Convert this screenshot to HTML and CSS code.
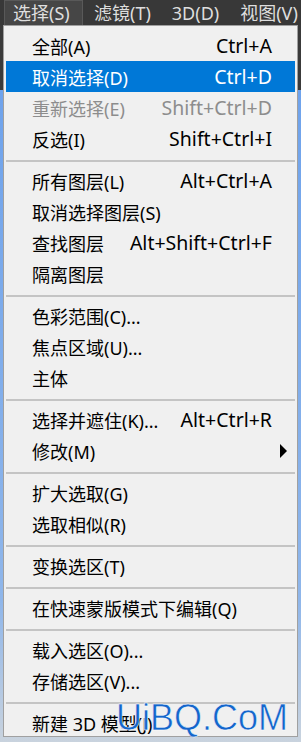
FILE: index.html
```html
<!DOCTYPE html>
<html>
<head>
<meta charset="utf-8">
<title>选择</title>
<link rel="stylesheet" href="styles.css">
</head>
<body>

<div class="menubar">
<div class="menubar_item menubar_item_active">选择(S)</div>
<div class="menubar_item">滤镜(T)</div>
<div class="menubar_item">3D(D)</div>
<div class="menubar_item">视图(V)</div>
</div>

<div class="stage">
<div class="menu">
<div class="menu_item"><span class="menu_label">全部(A)</span><span class="menu_key">Ctrl+A</span></div>
<div class="menu_item menu_item_hover"><span class="menu_label">取消选择(D)</span><span class="menu_key">Ctrl+D</span></div>
<div class="menu_item menu_item_off"><span class="menu_label">重新选择(E)</span><span class="menu_key">Shift+Ctrl+D</span></div>
<div class="menu_item"><span class="menu_label">反选(I)</span><span class="menu_key">Shift+Ctrl+I</span></div>
<div class="menu_sep"></div>
<div class="menu_item"><span class="menu_label">所有图层(L)</span><span class="menu_key">Alt+Ctrl+A</span></div>
<div class="menu_item"><span class="menu_label">取消选择图层(S)</span></div>
<div class="menu_item"><span class="menu_label">查找图层</span><span class="menu_key">Alt+Shift+Ctrl+F</span></div>
<div class="menu_item"><span class="menu_label">隔离图层</span></div>
<div class="menu_sep"></div>
<div class="menu_item"><span class="menu_label">色彩范围(C)...</span></div>
<div class="menu_item"><span class="menu_label">焦点区域(U)...</span></div>
<div class="menu_item"><span class="menu_label">主体</span></div>
<div class="menu_sep"></div>
<div class="menu_item"><span class="menu_label">选择并遮住(K)...</span><span class="menu_key">Alt+Ctrl+R</span></div>
<div class="menu_item"><span class="menu_label">修改(M)</span><span class="menu_arrow"></span></div>
<div class="menu_sep"></div>
<div class="menu_item"><span class="menu_label">扩大选取(G)</span></div>
<div class="menu_item"><span class="menu_label">选取相似(R)</span></div>
<div class="menu_sep"></div>
<div class="menu_item"><span class="menu_label">变换选区(T)</span></div>
<div class="menu_sep"></div>
<div class="menu_item"><span class="menu_label">在快速蒙版模式下编辑(Q)</span></div>
<div class="menu_sep"></div>
<div class="menu_item"><span class="menu_label">载入选区(O)...</span></div>
<div class="menu_item"><span class="menu_label">存储选区(V)...</span></div>
<div class="menu_sep"></div>
<div class="menu_item"><span class="menu_label">新建 3D 模型(J)</span></div>
<div class="watermark">UiBQ.CoM</div>
</div>
</div>

</body>
</html>
```

FILE: styles.css
```css
body{
margin: 0;
width: 301px;
height: 742px;
overflow: hidden;
background: linear-gradient(to bottom, #3a3a3a 0px, #3a3a3a 90px, #6fa3ec 90px, #8fb6ea 600px, #c9d3de 742px);
font-family: "Noto Sans", "Noto Sans CJK SC", sans-serif;
color: black;
}

.menubar{
display: flex;
height: 25px;
background-color: #383838;
padding-left: 4px;
overflow: hidden;
}

.menubar_item{
flex-shrink: 0;
display: flex;
align-items: center;
padding: 0 10px 0 11px;
font-size: 18px;
line-height: 1;
white-space: nowrap;
color: #dedede;
}

.menubar_item_active{
background-color: #464646;
border: 1px solid #595959;
border-bottom: none;
width: 79px;
box-sizing: border-box;
padding: 0 0 0 8px;
}

.stage{
padding: 0 3px;
}

.menu{
position: relative;
background-color: #f0f0f0;
border: 1px solid #a0a0a0;
padding: 4px 2px;
height: 712px;
box-sizing: border-box;
font-size: 18px;
}

.menu_item{
display: flex;
align-items: center;
justify-content: space-between;
height: 31px;
padding-left: 26px;
padding-right: 23px;
white-space: nowrap;
}

.menu_item_hover{
background-color: #0078d7;
color: white;
}

.menu_item_off{
color: #8d8d8d;
}

.menu_key{
font-size: 19.5px;
}

.menu_arrow{
width: 0;
height: 0;
border-top: 7.5px solid transparent;
border-bottom: 7.5px solid transparent;
border-left: 7px solid black;
margin-right: -15px;
}

.menu_sep{
height: 2px;
margin: 6px 0 3px 0;
background-color: #c4c4c4;
}

.watermark{
position: absolute;
right: 9px;
bottom: -2px;
font-family: "Liberation Sans", sans-serif;
font-size: 36px;
line-height: 1.15;
color: #1466cc;
-webkit-text-stroke: 0.5px white;
}
```
